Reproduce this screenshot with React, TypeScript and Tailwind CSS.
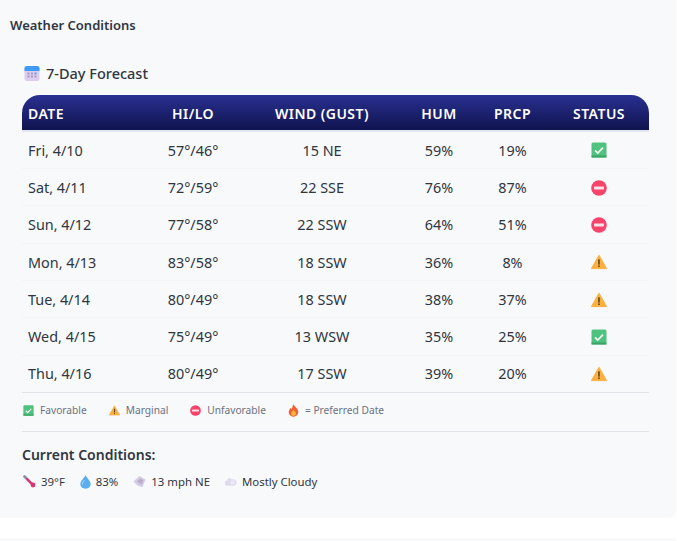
import React from 'react';

type Status = 'good' | 'warn' | 'bad';

const forecast: { date: string; hilo: string; wind: string; hum: string; prcp: string; status: Status }[] = [
  { date: 'Fri, 4/10', hilo: '57°/46°', wind: '15 NE', hum: '59%', prcp: '19%', status: 'good' },
  { date: 'Sat, 4/11', hilo: '72°/59°', wind: '22 SSE', hum: '76%', prcp: '87%', status: 'bad' },
  { date: 'Sun, 4/12', hilo: '77°/58°', wind: '22 SSW', hum: '64%', prcp: '51%', status: 'bad' },
  { date: 'Mon, 4/13', hilo: '83°/58°', wind: '18 SSW', hum: '36%', prcp: '8%', status: 'warn' },
  { date: 'Tue, 4/14', hilo: '80°/49°', wind: '18 SSW', hum: '38%', prcp: '37%', status: 'warn' },
  { date: 'Wed, 4/15', hilo: '75°/49°', wind: '13 WSW', hum: '35%', prcp: '25%', status: 'good' },
  { date: 'Thu, 4/16', hilo: '80°/49°', wind: '17 SSW', hum: '39%', prcp: '20%', status: 'warn' },
];

// Emoji are drawn by hand, the sandbox has no colour emoji font
const CheckIcon = ({ size = 16 }: { size?: number }) => (
  <svg width={size} height={size} viewBox="0 0 16 16" className="shrink-0">
    <rect x="0.5" y="0.5" width="15" height="15" rx="1.5" fill="#4fc27e" />
    <rect x="0.5" y="13.5" width="15" height="2" fill="#3ba566" />
    <path d="M4 8.3l2.8 2.7L12 5.6" fill="none" stroke="#f2fbf5" strokeWidth="1.7" />
  </svg>
);

const BadIcon = ({ size = 16 }: { size?: number }) => (
  <svg width={size} height={size} viewBox="0 0 16 16" className="shrink-0">
    <circle cx="8" cy="8" r="7.8" fill="#f8436a" />
    <rect x="3" y="6.6" width="10" height="2.8" rx="0.6" fill="#fbe3e8" />
  </svg>
);

const WarnIcon = ({ size = 16 }: { size?: number }) => (
  <svg width={size} height={size} viewBox="0 0 16 16" className="shrink-0">
    <path d="M8 1.2L15.6 14.6H0.4Z" fill="#fbb040" stroke="#fbb040" strokeLinejoin="round" />
    <rect x="7.2" y="5.4" width="1.6" height="5.2" fill="#5b4526" />
    <rect x="7.2" y="11.4" width="1.6" height="1.6" fill="#5b4526" />
  </svg>
);

const FireIcon = () => (
  <svg width="11" height="13" viewBox="0 0 12 14" className="shrink-0">
    <path d="M6 0.3C6.6 2.6 9 3.2 10.6 6.2C12.2 9.6 10.2 13.6 6 13.7C1.8 13.6-0.2 9.8 1.4 6.4C1.9 5.4 2.6 4.9 3 4.3C3.5 5 3.9 5.4 4.3 5.4C4.8 3.9 5 1.8 6 0.3Z" fill="#f25f30" />
    <path d="M6 6.2C7 7.6 8.8 8.6 8.6 10.6C8.4 12.2 7.2 13 6 13C4.6 13 3.4 12 3.4 10.4C3.4 8.8 5.4 8 6 6.2Z" fill="#fbb540" />
  </svg>
);

const CalendarIcon = () => (
  <svg width="16" height="16" viewBox="0 0 16 16" className="shrink-0">
    <rect x="0.5" y="1" width="15" height="15" rx="2.5" fill="#dccdf0" />
    <path d="M0.5 6V3.5A2.5 2.5 0 0 1 3 1H13A2.5 2.5 0 0 1 15.5 3.5V6Z" fill="#3f9bf5" />
    <g fill="#a79bbd">
      <rect x="3.5" y="7.5" width="2" height="2" />
      <rect x="7" y="7.5" width="2" height="2" />
      <rect x="3.5" y="10.5" width="2" height="2" />
      <rect x="7" y="10.5" width="2" height="2" />
      <rect x="10.5" y="10.5" width="2" height="2" />
    </g>
    <rect x="10.5" y="7.5" width="2" height="2" fill="#4f9cf0" />
  </svg>
);

const ThermometerIcon = () => (
  <svg width="13" height="13" viewBox="0 0 13 13" className="shrink-0">
    <path d="M1.5 1.5L10 10" stroke="#8d8aa8" strokeWidth="2.6" strokeLinecap="round" />
    <path d="M4 4L10 10" stroke="#d8346e" strokeWidth="1.8" strokeLinecap="round" />
    <circle cx="10" cy="10" r="2.4" fill="#d8346e" />
  </svg>
);

const DropIcon = () => (
  <svg width="11" height="14" viewBox="0 0 11 14" className="shrink-0">
    <path d="M5.5 0.3C6.8 3 10.6 5.8 10.6 9C10.6 11.8 8.4 13.7 5.5 13.7C2.6 13.7 0.4 11.8 0.4 9C0.4 5.8 4.2 3 5.5 0.3Z" fill="#5aaef0" />
    <path d="M2.4 9.2C2.4 7.8 3.2 6.6 4.2 5.6" fill="none" stroke="#b4def9" strokeWidth="1" strokeLinecap="round" />
  </svg>
);

const WindIcon = () => (
  <svg width="13" height="13" viewBox="0 0 13 13" className="shrink-0">
    <path d="M0.4 6.4L6.4 1L12.6 4.6L9.4 12.2L4.4 10.4Z" fill="#d5cde4" />
    <path d="M3.6 6.4L7.4 3.4L10.6 5.4L8.4 9.6Z" fill="#b9add0" />
  </svg>
);

const CloudIcon = () => (
  <svg width="13" height="9" viewBox="0 0 14 10" className="shrink-0">
    <path d="M3 9.6A2.7 2.7 0 0 1 2.6 4.3A3.4 3.4 0 0 1 8.9 2.8A3.4 3.4 0 0 1 11.2 9.6Z" fill="#dfdaee" />
    <circle cx="9.4" cy="6" r="2.7" fill="#ebe8f5" />
  </svg>
);

const statusIcons: Record<Status, React.ReactNode> = {
  good: <CheckIcon />,
  warn: <WarnIcon />,
  bad: <BadIcon />,
};

const headers = ['HI/LO', 'WIND (GUST)', 'HUM', 'PRCP', 'STATUS'];

export default function App() {
  return (
    <div className="min-h-[541px] overflow-hidden bg-white font-['Noto_Sans','Open_Sans',sans-serif] text-[#2f3640]">
      <div className="h-[518px] w-[676px] rounded-br-lg bg-[#f8f9fb] px-[10px] pt-[17px]">
        <h2 className="text-[13px] font-semibold leading-[17px] text-[#303640]">Weather Conditions</h2>

        <div className="ml-[12px] mt-[28px] w-[627px]">
          <div className="flex h-[22px] items-center gap-[6px] pl-[2px]">
            <CalendarIcon />
            <h3 className="text-[14.5px] font-medium leading-[22px] text-[#303640]">7-Day Forecast</h3>
          </div>

          <table className="mt-[11px] w-full table-fixed border-collapse text-[14.4px]">
            <colgroup>
              <col className="w-[122px]" />
              <col className="w-[98px]" />
              <col className="w-[160px]" />
              <col className="w-[74px]" />
              <col className="w-[73px]" />
              <col className="w-[100px]" />
            </colgroup>
            <thead>
              <tr className="h-[36px] text-[14px] font-semibold tracking-[0.45px] text-white">
                <th className="rounded-tl-[18px] bg-gradient-to-b from-[#2a3192] to-[#10134f] pl-[6px] pt-[1px] text-left font-semibold">DATE</th>
                {headers.map((h, i) => (
                  <th
                    key={h}
                    className={`bg-gradient-to-b from-[#2a3192] to-[#10134f] pt-[1px] text-center font-semibold ${i === 4 ? 'rounded-tr-[18px]' : ''}`}
                  >
                    {h}
                  </th>
                ))}
              </tr>
            </thead>
            <tbody className="border-t-2 border-[#e2e6ee]">
              {forecast.map((row) => (
                <tr key={row.date} className="h-[37.4px] border-b border-[#f3f4f7] last:h-[36.4px] last:border-b-0">
                  <td className="pl-[6px] pt-[1px]">{row.date}</td>
                  <td className="pt-[1px] text-center">{row.hilo}</td>
                  <td className="pt-[1px] text-center">{row.wind}</td>
                  <td className="pt-[1px] text-center">{row.hum}</td>
                  <td className="pt-[1px] text-center">{row.prcp}</td>
                  <td className="pt-[1px]">
                    <div className="flex justify-center">{statusIcons[row.status]}</div>
                  </td>
                </tr>
              ))}
            </tbody>
          </table>

          <div className="flex h-[40px] items-center gap-[22px] border-y border-[#e1e3e8] pb-[2px] pl-[1px] text-[10.2px] text-[#6b7280]">
            <div className="flex items-center gap-[6px]">
              <CheckIcon size={11} />
              <span>Favorable</span>
            </div>
            <div className="flex items-center gap-[6px]">
              <WarnIcon size={11} />
              <span>Marginal</span>
            </div>
            <div className="flex items-center gap-[6px]">
              <BadIcon size={11} />
              <span>Unfavorable</span>
            </div>
            <div className="flex items-center gap-[6px]">
              <FireIcon />
              <span>= Preferred Date</span>
            </div>
          </div>

          <h3 className="mt-[13px] text-[14px] font-semibold leading-[20px] text-[#303640]">Current Conditions:</h3>
          <div className="mt-[8px] flex items-center gap-[14px] text-[11.4px] leading-[18px] text-[#303640]">
            <div className="flex items-center gap-[5px] pl-[1px]">
              <ThermometerIcon />
              <span>39°F</span>
            </div>
            <div className="ml-[1px] flex items-center gap-[5px]">
              <DropIcon />
              <span>83%</span>
            </div>
            <div className="ml-[1px] flex items-center gap-[5px]">
              <WindIcon />
              <span>13 mph NE</span>
            </div>
            <div className="flex items-center gap-[5px]">
              <CloudIcon />
              <span>Mostly Cloudy</span>
            </div>
          </div>
        </div>
      </div>
      <div className="mt-[20px] h-[3px] w-[676px] rounded-tr-lg bg-[#f8f9fb]" />
    </div>
  );
}
